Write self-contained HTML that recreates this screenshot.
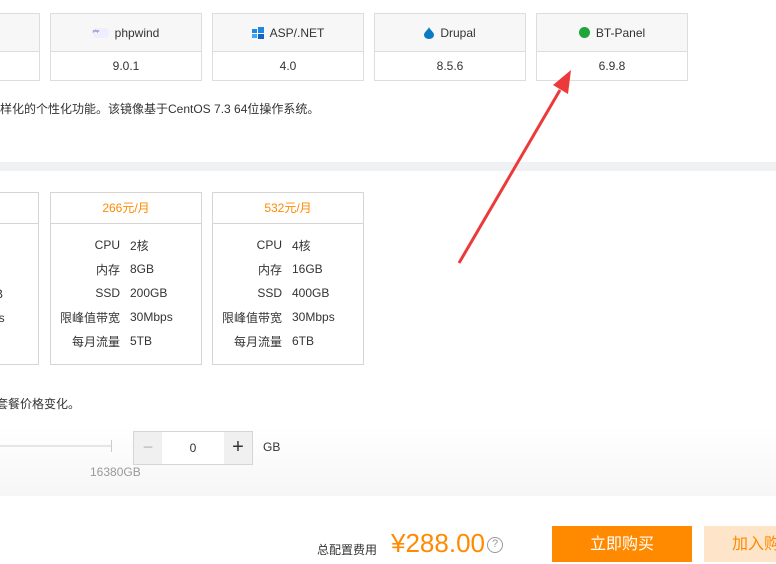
<!DOCTYPE html>
<html><head><meta charset="utf-8"><style>
*{margin:0;padding:0;box-sizing:border-box}
body{width:776px;height:561px;overflow:hidden;background:#fff;position:relative;font-family:"Liberation Sans","Noto Sans CJK SC",sans-serif;font-size:12px;color:#333}
.a{position:absolute}
.box{position:absolute;top:13px;height:68px;border:1px solid #ddd;background:#fff}
.box .h{height:38px;background:#f7f7f7;border-bottom:1px solid #ddd;display:flex;align-items:center;justify-content:center;gap:6px}
.box .v{height:28px;line-height:28px;text-align:center}
.card{position:absolute;top:192px;width:152px;height:173px;border:1px solid #d5d5d5}
.card .h{height:31px;border-bottom:1px solid #d5d5d5;color:#ff8a00;text-align:center;line-height:31px}
.card table{margin-top:9px;margin-left:9px;border-collapse:collapse}
.card td{height:24px;padding:0}
.card td.l{width:70px;text-align:right;padding-right:10px}
</style></head><body>
<div class="box" style="left:-10px;width:50px"><div class="h"></div><div class="v"></div></div>
<div class="box" style="left:50px;width:152px"><div class="h"><span style="display:inline-block;width:16px;height:10px;border-radius:4px;background:#eef;font-size:4px;color:#449">php</span>phpwind</div><div class="v">9.0.1</div></div>
<div class="box" style="left:212px;width:152px"><div class="h"><svg width="12" height="12"><rect x="0" y="2" width="5" height="4" fill="#1e88e5"/><rect x="6" y="0" width="6" height="6" fill="#1e88e5"/><rect x="0" y="7" width="5" height="4" fill="#42a5f5"/><rect x="6" y="7" width="6" height="5" fill="#1565c0"/></svg>ASP/.NET</div><div class="v">4.0</div></div>
<div class="box" style="left:374px;width:152px"><div class="h"><svg width="10" height="12"><path d="M5 0C6 3 10 5 10 8A5 4 0 0 1 0 8C0 5 4 3 5 0Z" fill="#0a7bc2"/></svg>Drupal</div><div class="v">8.5.6</div></div>
<div class="box" style="left:536px;width:152px"><div class="h"><span style="display:inline-block;width:11px;height:11px;border-radius:50%;background:#20a53a"></span>BT-Panel</div><div class="v">6.9.8</div></div>
<div class="a" style="left:0;top:100px">样化的个性化功能。该镜像基于CentOS 7.3 64位操作系统。</div>
<div class="a" style="left:0;top:162px;width:776px;height:9px;background:#f0f1f3"></div>
<div class="a" style="left:0;top:425px;width:776px;height:71px;background:linear-gradient(#fff,#f6f6f6)"></div>
<div class="card" style="left:-113px"><div class="h"></div></div>
<div class="card" style="left:50px"><div class="h">266元/月</div><table><tr><td class="l">CPU</td><td>2核</td></tr><tr><td class="l">内存</td><td>8GB</td></tr><tr><td class="l">SSD</td><td>200GB</td></tr><tr><td class="l">限峰值带宽</td><td>30Mbps</td></tr><tr><td class="l">每月流量</td><td>5TB</td></tr></table></div>
<div class="card" style="left:212px"><div class="h">532元/月</div><table><tr><td class="l">CPU</td><td>4核</td></tr><tr><td class="l">内存</td><td>16GB</td></tr><tr><td class="l">SSD</td><td>400GB</td></tr><tr><td class="l">限峰值带宽</td><td>30Mbps</td></tr><tr><td class="l">每月流量</td><td>6TB</td></tr></table></div>
<div class="a" style="left:-5px;top:287px">B</div>
<div class="a" style="left:-8px;top:311px">ps</div>
<div class="a" style="left:-4px;top:395px">套餐价格变化。</div>
<div class="a" style="left:0;top:445px;width:112px;height:2px;background:#e6e6e6"></div>
<div class="a" style="left:111px;top:440px;width:1px;height:12px;background:#ccc"></div>
<div class="a" style="left:90px;top:465px;color:#999">16380GB</div>
<div class="a" style="left:133px;top:431px;width:120px;height:34px;border:1px solid #d5d5d5;background:#fff;display:flex">
<div style="width:28px;background:#f0f0f0;color:#bbb;text-align:center;line-height:30px;font-size:18px">−</div>
<div style="flex:1;text-align:center;line-height:32px">0</div>
<div style="width:28px;background:#f0f0f0;text-align:center;line-height:30px;font-size:20px">+</div></div>
<div class="a" style="left:263px;top:440px">GB</div>
<div class="a" style="left:317px;top:541px">总配置费用</div>
<div class="a" style="left:391px;top:528px;color:#ff8a00;font-size:26px">¥288.00</div>
<div class="a" style="left:487px;top:537px;width:16px;height:16px;border:1.5px solid #999;border-radius:50%;color:#999;font-size:11px;text-align:center;line-height:13px">?</div>
<div class="a" style="left:552px;top:526px;width:140px;height:36px;background:#ff8a00;color:#fff;font-size:16px;text-align:center;line-height:38px">立即购买</div>
<div class="a" style="left:704px;top:526px;width:80px;height:36px;background:#fee4c9;color:#ff8a00;font-size:16px;line-height:38px;padding-left:28px;white-space:nowrap;overflow:hidden">加入购物车</div>
<svg class="a" style="left:0;top:0" width="776" height="561"><line x1="459" y1="263" x2="560" y2="90" stroke="#ec3a3a" stroke-width="3"/><polygon points="571,70 553,85 568,94" fill="#ec3a3a"/></svg>
</body></html>
